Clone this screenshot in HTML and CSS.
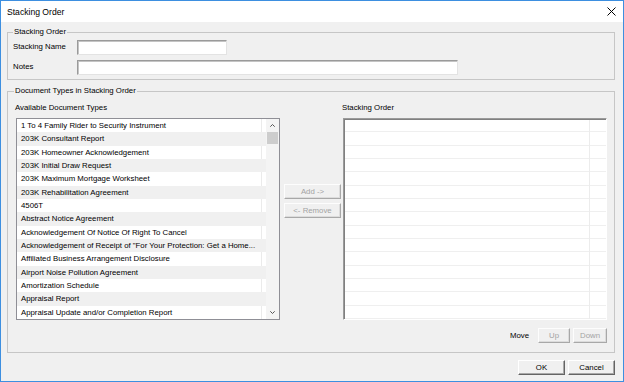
FILE: index.html
```html
<!DOCTYPE html>
<html>
<head>
<meta charset="utf-8">
<link rel="stylesheet" href="styles.css">
</head>
<body>
<div class="window">
  <div class="titlebar">
    <span class="title">Stacking Order</span>
    <svg class="close" width="9" height="9" viewBox="0 0 9 9"><path d="M0.5 0.5 L8.5 8.5 M8.5 0.5 L0.5 8.5" stroke="#000" stroke-width="1" fill="none"/></svg>
  </div>
  <div class="client">
    <fieldset class="group g1">
      <legend>Stacking Order</legend>
      <div class="form">
        <label class="lbl">Stacking Name</label><div class="input w-name"></div>
        <label class="lbl">Notes</label><div class="input w-notes"></div>
      </div>
    </fieldset>
    <fieldset class="group g2">
      <legend>Document Types in Stacking Order</legend>
      <div class="doc-cols">
        <div class="col-left">
          <div class="cap">Available Document Types</div>
          <div class="listbox">
            <div class="rows">
              <div class="row">1 To 4 Family Rider to Security Instrument</div>
              <div class="row">203K Consultant Report</div>
              <div class="row">203K Homeowner Acknowledgement</div>
              <div class="row">203K Initial Draw Request</div>
              <div class="row">203K Maximum Mortgage Worksheet</div>
              <div class="row">203K Rehabilitation Agreement</div>
              <div class="row">4506T</div>
              <div class="row">Abstract Notice Agreement</div>
              <div class="row">Acknowledgement Of Notice Of Right To Cancel</div>
              <div class="row">Acknowledgement of Receipt of "For Your Protection: Get a Home...</div>
              <div class="row">Affiliated Business Arrangement Disclosure</div>
              <div class="row">Airport Noise Pollution Agreement</div>
              <div class="row">Amortization Schedule</div>
              <div class="row">Appraisal Report</div>
              <div class="row">Appraisal Update and/or Completion Report</div>
            </div>
            <div class="vscroll">
              <div class="arrow"><svg width="5" height="3" viewBox="0 0 5 3"><path d="M0.3 2.7 L2.5 0.5 L4.7 2.7" stroke="#555" stroke-width="1" fill="none"/></svg></div>
              <div class="thumb"></div>
              <div class="arrow arrow-down"><svg width="5" height="3" viewBox="0 0 5 3"><path d="M0.3 0.3 L2.5 2.5 L4.7 0.3" stroke="#555" stroke-width="1" fill="none"/></svg></div>
            </div>
          </div>
        </div>
        <div class="col-mid">
          <button class="btn disabled">Add -&gt;</button>
          <button class="btn disabled">&lt;- Remove</button>
        </div>
        <div class="col-right">
          <div class="cap cap-right">Stacking Order</div>
          <div class="grid-list"></div>
          <div class="move-row">
            <span class="move-lbl">Move</span>
            <button class="btn disabled w-up">Up</button>
            <button class="btn disabled w-down">Down</button>
          </div>
        </div>
      </div>
    </fieldset>
    <div class="dialog-buttons">
      <button class="btn w-dlg">OK</button>
      <button class="btn w-dlg">Cancel</button>
    </div>
  </div>
</div>
</body>
</html>
```
FILE: styles.css
```css
* { box-sizing: border-box; }
html, body { margin: 0; padding: 0; }
body {
  font-family: "Liberation Sans", Arial, sans-serif;
  font-size: 7.8px;
  color: #000;
  background: #fff;
}
.window {
  width: 624px;
  height: 382px;
  border: 1px solid #3d8fe0;
  display: flex;
  flex-direction: column;
  background: #f0f0f0;
}
.titlebar {
  height: 21px;
  flex: none;
  background: #fff;
  display: flex;
  align-items: center;
  justify-content: space-between;
  padding: 0 7px 0 6px;
}
.title {
  font-size: 8.6px;
  line-height: 21px;
  padding-top: 1px;
}
.close { display: block; }
.client {
  flex: 1;
  display: flex;
  flex-direction: column;
  padding: 5px 8px 0 6px;
}
.group {
  margin: 0;
  min-width: 0;
  border: 1px solid #c6c6c6;
}
.group legend {
  padding: 0 1px;
  line-height: 10px;
}
.g1 { padding: 3px 0 4px 5px; }
.g2 { margin-top: 6px; padding: 7px 7px 9px 7px; }
.g2 legend { margin-left: -1px; }
.form {
  display: grid;
  grid-template-columns: 64px auto;
  row-gap: 5px;
  align-items: start;
  justify-items: start;
}
.lbl { line-height: 13px; }
.input {
  height: 15px;
  background: #fff;
  border: 1px solid;
  border-color: #9a9a9a #e3e3e3 #e3e3e3 #9a9a9a;
  box-shadow: inset 1px 1px 0 #c4c4c4;
}
.w-name { width: 150px; }
.w-notes { width: 381px; }
.doc-cols {
  display: flex;
  align-items: flex-start;
}
.col-left { width: 265px; }
.cap { line-height: 10px; margin-bottom: 5px; }
.cap-right { margin-left: -1px; }
.listbox {
  margin-left: 1px;
  width: 264px;
  height: 202px;
  border: 1px solid #8f8f96;
  background: #fff;
  display: flex;
}
.rows { width: 249px; }
.row {
  height: 13.33px;
  line-height: 13.33px;
  padding-left: 4px;
  white-space: nowrap;
  overflow: hidden;
}
.row:nth-child(odd) {
  background: linear-gradient(to right, transparent 244px, #ebebeb 244px, #ebebeb 245px, transparent 245px);
}
.row:nth-child(even) { background: #f0f0f0; }
.vscroll {
  width: 13px;
  background: #f4f4f4;
  display: flex;
  flex-direction: column;
}
.arrow {
  height: 13px;
  display: flex;
  align-items: center;
  justify-content: center;
}
.arrow svg { display: block; }
.arrow-down { margin-top: auto; }
.thumb {
  height: 12px;
  margin: 0 1px;
  background: #cdcdcd;
}
.col-mid {
  width: 57px;
  margin-left: 4px;
  padding-top: 81px;
  display: flex;
  flex-direction: column;
  gap: 4px;
}
.btn {
  font-family: inherit;
  font-size: 7.8px;
  height: 15px;
  padding: 0;
  margin: 0;
  background: #f0f0f0;
  color: #000;
  border: 1px solid;
  border-color: #fff #646464 #646464 #fff;
  box-shadow: inset -1px -1px 0 #a8a8a8;
  line-height: 12px;
}
.btn.disabled {
  color: #a3a3a3;
  border-color: #fdfdfd #a8a8a8 #a8a8a8 #fdfdfd;
  box-shadow: inset -1px -1px 0 #dcdcdc;
}
.col-mid .btn { width: 57px; }
.col-right { width: 264px; margin-left: 2px; }
.grid-list {
  width: 264px;
  height: 202px;
  border: 1px solid;
  border-color: #9a9a9a #fff #fff #9a9a9a;
  box-shadow: inset 1px 1px 0 #808080;
  background-color: #fff;
  background-image:
    linear-gradient(to right, transparent 245px, #ececec 245px, #ececec 246px, transparent 246px),
    repeating-linear-gradient(to bottom, transparent 0, transparent 12.5px, #efefef 12.5px, #efefef 13.33px);
}
.move-row {
  margin-top: 8px;
  height: 15px;
  display: flex;
  justify-content: flex-end;
  align-items: center;
  gap: 3px;
}
.move-lbl { margin-right: 6px; }
.w-up { width: 32px; }
.w-down { width: 34px; }
.dialog-buttons {
  margin-top: 7px;
  display: flex;
  justify-content: flex-end;
  gap: 3px;
}
.w-dlg { width: 47px; }
```
